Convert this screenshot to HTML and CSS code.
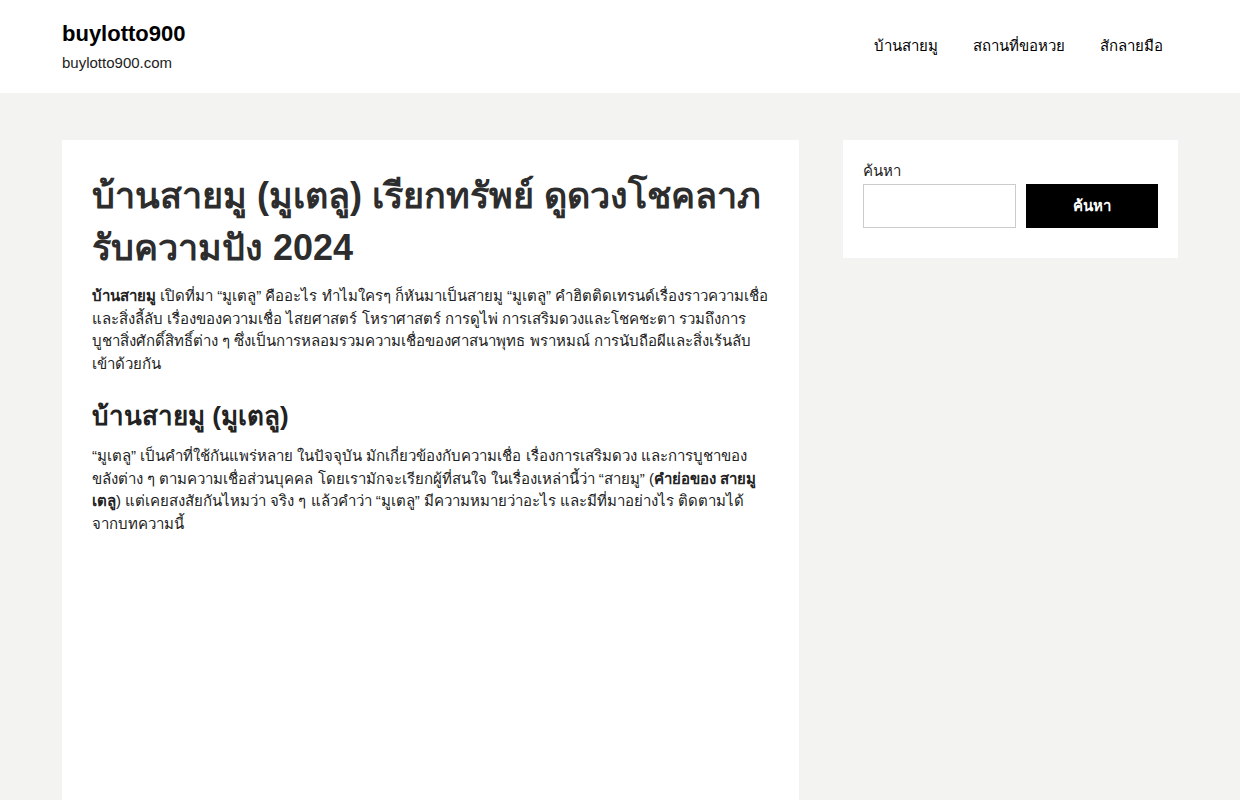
FILE: index.html
```html
<!DOCTYPE html>
<html lang="th">
<head>
<meta charset="utf-8">
<title>buylotto900</title>
<link rel="stylesheet" href="styles.css">
</head>
<body>
<header class="site-header">
  <div class="inner header-inner">
    <div class="branding">
      <p class="site-title">buylotto900</p>
      <p class="site-desc">buylotto900.com</p>
    </div>
    <nav class="main-nav">
      <a href="#">บ้านสายมู</a>
      <a href="#">สถานที่ขอหวย</a>
      <a href="#">สักลายมือ</a>
    </nav>
  </div>
</header>
<div class="inner site-content">
  <main class="content-area">
    <article class="post">
      <h1 class="entry-title">บ้านสายมู (มูเตลู) เรียกทรัพย์ ดูดวงโชคลาภ รับความปัง 2024</h1>
      <p><strong>บ้านสายมู</strong> เปิดที่มา “มูเตลู” คืออะไร ทำไมใครๆ ก็หันมาเป็นสายมู “มูเตลู” คำฮิตติดเทรนด์เรื่องราวความเชื่อและสิ่งลี้ลับ เรื่องของความเชื่อ ไสยศาสตร์ โหราศาสตร์ การดูไพ่ การเสริมดวงและโชคชะตา รวมถึงการบูชาสิ่งศักดิ์สิทธิ์ต่าง ๆ ซึ่งเป็นการหลอมรวมความเชื่อของศาสนาพุทธ พราหมณ์ การนับถือผีและสิ่งเร้นลับเข้าด้วยกัน</p>
      <h2>บ้านสายมู (มูเตลู)</h2>
      <p>“มูเตลู” เป็นคำที่ใช้กันแพร่หลาย ในปัจจุบัน มักเกี่ยวข้องกับความเชื่อ เรื่องการเสริมดวง และการบูชาของขลังต่าง ๆ ตามความเชื่อส่วนบุคคล โดยเรามักจะเรียกผู้ที่สนใจ ในเรื่องเหล่านี้ว่า “สายมู” (<strong>คำย่อของ สายมู เตลู</strong>) แต่เคยสงสัยกันไหมว่า จริง ๆ แล้วคำว่า “มูเตลู” มีความหมายว่าอะไร และมีที่มาอย่างไร ติดตามได้จากบทความนี้</p>
    </article>
  </main>
  <aside class="sidebar">
    <div class="widget">
      <form class="search-form">
        <label class="search-label" for="s">ค้นหา</label>
        <div class="search-row">
          <input id="s" class="search-input" type="search">
          <button class="search-btn" type="button">ค้นหา</button>
        </div>
      </form>
    </div>
  </aside>
</div>
</body>
</html>
```

FILE: styles.css
```css
* { box-sizing: border-box; }
html, body { margin: 0; padding: 0; }
body {
  background: #f3f4f2;
  color: #222222;
  font-family: "Liberation Sans", Arial, sans-serif;
  font-size: 15px;
  line-height: 1.5;
}
.inner {
  width: 1116px;
  margin: 0 auto;
}
.site-header {
  background: #ffffff;
  height: 93px;
}
.header-inner {
  display: flex;
  justify-content: space-between;
  align-items: center;
  height: 93px;
}
.branding { padding-top: 2px; }
.site-title {
  margin: 0;
  font-size: 22px;
  font-weight: bold;
  line-height: 1.2;
  color: #000;
}
.site-desc {
  margin: 5px 0 0;
  font-size: 15px;
  line-height: 1.5;
  color: #222;
}
.main-nav {
  display: flex;
  align-self: stretch;
  align-items: center;
}
.main-nav a {
  color: #000;
  text-decoration: none;
  font-size: 15px;
  padding: 0 15px 0 20px;
}
.site-content {
  display: flex;
  gap: 44px;
  padding-top: 47px;
  align-items: flex-start;
}
.content-area { width: 737px; flex: none; }
.post {
  background: #fff;
  padding: 30px 30px 0;
  min-height: 700px;
}
.entry-title {
  margin: 0 0 11px;
  font-size: 36px;
  font-weight: bold;
  line-height: 1.45;
  color: #2d2d2d;
}
.post p {
  margin: 0 0 24px;
  color: #222;
}
.post h2 {
  margin: 0 0 12px;
  padding-top: 1px;
  font-size: 26px;
  font-weight: bold;
  line-height: 1.3;
  color: #222;
}
.post h2 + p { margin-top: -1px; }
.sidebar { width: 335px; flex: none; }
.widget {
  background: #fff;
  padding: 20px 20px 30px;
}
.search-label {
  display: block;
  font-size: 15px;
  line-height: 1.5;
  color: #222;
  margin-bottom: 1px;
}
.search-row { display: flex; gap: 10px; }
.search-input {
  width: 153px;
  height: 44px;
  border: 1px solid #cccccc;
  background: #fff;
  padding: 0 10px;
  font: inherit;
}
.search-btn {
  flex: 1;
  height: 44px;
  background: #000;
  color: #fff;
  border: 0;
  font-family: inherit;
  font-size: 15px;
  font-weight: bold;
}
```
